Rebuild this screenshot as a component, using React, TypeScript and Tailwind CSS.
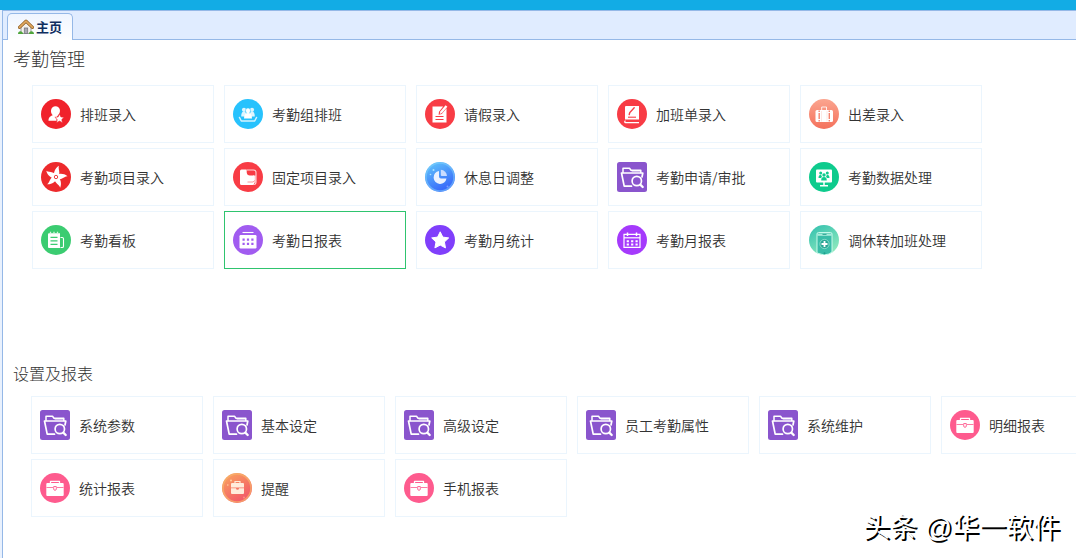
import type { ReactNode } from "react";

type Item = { label: string; icon: ReactNode; active?: boolean };

function Disc({ fill, children }: { fill: string; children: ReactNode }) {
  return (
    <svg viewBox="0 0 30 30" className="size-[30px] shrink-0" aria-hidden="true">
      <circle cx="15" cy="15" r="15" fill={fill} />
      {children}
    </svg>
  );
}

function HomeIcon() {
  return (
    <svg viewBox="0 0 16 16" className="size-4 shrink-0" aria-hidden="true">
      <path d="M3 8 8 3.5 13 8v6.5H3z" fill="#f3f1ee" stroke="#8b8b8b" strokeWidth=".8" />
      <rect x="6.3" y="9" width="3.4" height="5.5" fill="#a9a9b3" stroke="#77777f" strokeWidth=".8" />
      <path d="M1.500 8.400 8 2.200l6.500 6.200" fill="none" stroke="#8a5a1e" strokeWidth="3" strokeLinejoin="round" strokeLinecap="round" />
      <path d="M1.500 8.400 8 2.200l6.500 6.200" fill="none" stroke="#e0a860" strokeWidth="1.800" strokeLinejoin="round" strokeLinecap="round" />
      <path d="M0 15c0-2 1-2.800 2.400-2.800S4.800 13 5.200 15zM10.800 15c.2-2 1.200-2.800 2.600-2.800S16 13 16 15z" fill="#4fa53c" />
    </svg>
  );
}

const userStar = (
  <Disc fill="#f0222b">
    <path d="M7.500 21.800c0-3.600 1.800-4.700 4.300-5.600-3.200-3-2-9 2.700-9s5.900 5.600 2.700 8.800c-1.400 1.500-2 3.500-1.400 5.800z" fill="#fff" />
    <path d="m18.500 15 1.400 2.900 3.200.4-2.300 2.200.6 3.200-2.900-1.600-2.900 1.600.6-3.200-2.300-2.200 3.200-.4z" fill="#fff" stroke="#f0222b" strokeWidth=".6" />
  </Disc>
);

const group = (
  <Disc fill="#27c2fd">
    <g fill="#fff">
      <g opacity=".85">
        <circle cx="11" cy="10.800" r="2.100" />
        <circle cx="19" cy="10.800" r="2.100" />
        <path d="M8.200 17.500c0-3.500 1-5 2.800-5s2.500 1.500 2.500 5zM21.800 17.500c0-3.500-1-5-2.800-5s-2.500 1.500-2.500 5z" />
      </g>
      <ellipse cx="15" cy="11.800" rx="2.500" ry="2.900" stroke="#27c2fd" strokeWidth=".5" />
      <path d="M11 19.500c0-3.600 1.500-5.500 4-5.500s4 1.900 4 5.500z" />
    </g>
    <path d="M6.500 18.500 8.300 22h13.400l1.800-3.500" fill="none" stroke="#fff" strokeWidth="1.500" strokeLinejoin="round" strokeLinecap="round" opacity=".8" />
  </Disc>
);

const formEdit = (
  <Disc fill="#f83c45">
    <path d="M7.500 7.500h10.700L14 12.800l-.4 3 3.200-.8 4.700-5.800v14.300h-14z" fill="#fff" />
    <path d="m14.800 14.900.5-2.300 5.300-6.300 1.800 1.500-5.400 6.300z" fill="#fff" />
    <path d="M10.500 17.500h8M10.500 20.500h8" stroke="#f83c45" strokeWidth="1.100" />
  </Disc>
);

const bookEdit = (
  <Disc fill="#f83c45">
    <path d="M9 7h13v13.500H8V8a1 1 0 0 1 1-1z" fill="#fff" />
    <path d="M8.500 21.800c-1 0-1 1.800 0 1.800H22" fill="none" stroke="#fff" strokeWidth="1.200" />
    <path d="m12.200 15.500.6-2 4.400-4.700" fill="none" stroke="#f83c45" strokeWidth="1.400" strokeLinecap="round" />
    <path d="M11 18.200h8" stroke="#f83c45" strokeWidth="1.100" />
  </Disc>
);

const luggage = (
  <Disc fill="url(#coral)">
    <defs>
      <linearGradient id="coral" x1="0" y1="0" x2="0" y2="1">
        <stop stopColor="#fba58f" />
        <stop offset="1" stopColor="#f4715c" />
      </linearGradient>
    </defs>
    <path d="M12.700 11V8h4.800v3" fill="none" stroke="#fff" strokeWidth="1" opacity=".85" />
    <rect x="6.500" y="11" width="17.500" height="12" rx="1.500" fill="#fff" />
    <path d="M10.200 11.500v1.500m0 1v6m0 1v1.500M20.300 11.500v1.500m0 1v6m0 1v1.500" stroke="#f58470" strokeWidth="1.400" />
    <path d="M12.500 12v10.500M18 12v10.500" stroke="#fbd0c6" strokeWidth=".5" />
  </Disc>
);

const bladeAngles = [0, 72, 144, 216, 288];

const pinwheel = (
  <Disc fill="#ed2a2c">
    <g fill="#fff">
      {bladeAngles.map((angle) => (
        <path
          key={angle}
          d="M14.500 17C10 16 6.500 13.500 5.300 8.800c1.800 1.300 4 1 6.200 1.600 2.700.7 4.500 2.600 4.500 4.600z"
          transform={`rotate(${angle} 15 15)`}
        />
      ))}
    </g>
    <circle cx="15" cy="15" r="1.700" fill="#fff" stroke="#ed2a2c" strokeWidth=".9" />
  </Disc>
);

const docFold = (
  <Disc fill="#f83c45">
    <path d="M8.500 7.500h5.200v2.700c0 2 1.300 3.300 3.300 3.300h4v8a1.500 1.500 0 0 1-1.500 1.500h-11A1.500 1.500 0 0 1 7 21.500V9a1.500 1.500 0 0 1 1.500-1.500z" fill="#fff" />
    <path d="M14 8h6.500a2.500 2.500 0 0 1 2.500 2.500V20a2.500 2.500 0 0 1-2.500 2.500" fill="none" stroke="#fff" strokeWidth="1.100" opacity=".8" />
    <path d="M20 13.500h2.500V20L20 22z" fill="#fff" opacity=".9" />
    <path d="M14.500 20h5.500l2-1.500" fill="none" stroke="#f98a8f" strokeWidth=".9" />
  </Disc>
);

const pie = (
  <Disc fill="url(#azure)">
    <defs>
      <linearGradient id="azure" x1=".2" y1="0" x2=".7" y2="1">
        <stop stopColor="#5fc3fb" />
        <stop offset="1" stopColor="#3560fa" />
      </linearGradient>
    </defs>
    <circle cx="15" cy="15" r="14" fill="none" stroke="#7fd0fb" strokeWidth="1.500" opacity=".55" />
    <path d="M14 9a6.500 6.500 0 1 0 7.500 7.500H16a2 2 0 0 1-2-2z" fill="#eaf1ff" />
    <path d="M15.800 7.800a6.300 6.300 0 0 1 6.200 6.200h-5.200a1 1 0 0 1-1-1z" fill="#c9dcff" />
    <circle cx="8.500" cy="8" r="1" fill="#a9e2ff" />
    <circle cx="5.500" cy="12.500" r=".8" fill="#a9e2ff" />
    <circle cx="22.500" cy="24.500" r="1" fill="#7e9dff" />
  </Disc>
);

const folder = (
  <svg viewBox="0 0 30 30" className="size-[30px] shrink-0" aria-hidden="true">
    <rect width="30" height="30" rx="2.500" fill="#8a55cd" />
    <g fill="none" stroke="#fff" strokeLinejoin="round" strokeLinecap="round">
      <path d="M6 10.500V6.200h6.500l1.500 2h9.800v2.300" strokeWidth="1.500" />
      <path d="M14.500 24.200H7.200L4.500 11h21.300l-.8 4" strokeWidth="1.700" />
      <path d="M15 9.200h8" strokeWidth=".8" />
      <circle cx="19.800" cy="19" r="4.700" strokeWidth="1.700" />
      <path d="m23.300 22.600 2.400 2.400" strokeWidth="2.300" />
    </g>
  </svg>
);

const screen = (
  <Disc fill="#0ecb8d">
    <rect x="7" y="7.500" width="16" height="13" rx="1" fill="#fff" />
    <path d="M15 20v3.500M11 23.700h8" stroke="#fff" strokeWidth="1.500" />
    <g fill="#0ecb8d">
      <circle cx="11.700" cy="11" r="1.500" />
      <circle cx="18.300" cy="11" r="1.500" />
      <circle cx="15" cy="13" r="1.700" />
      <path d="M9.500 16c0-2.300 1-3.300 2.500-3.300l1 2-1 1.300zM20.500 16c0-2.300-1-3.300-2.500-3.300l-1 2 1 1.300zM12.200 18.500c0-2.400 1-3.400 2.800-3.400s2.800 1 2.800 3.400z" />
    </g>
  </Disc>
);

const clipboard = (
  <Disc fill="#3bcc71">
    <path d="M8 8.300h11V23H8a1 1 0 0 1-1-1V9.300a1 1 0 0 1 1-1z" fill="#fff" />
    <path d="M9.500 6.800v2.500M13 6.800v2.500M16.500 6.800v2.500" stroke="#d8f6e3" strokeWidth="1.300" />
    <path d="M9.500 12.300h7M9.500 15.800h7M9.500 19.300h7" stroke="#3bcc71" strokeWidth="1.200" />
    <path d="M19.500 12.500h1.700a1.300 1.300 0 0 1 1.300 1.300v7.400a1.300 1.300 0 0 1-1.300 1.300h-1.700" fill="none" stroke="#fff" strokeWidth="1.100" />
  </Disc>
);

const dayReport = (
  <Disc fill="#a15cf0">
    <path d="M9.500 7.500h11" stroke="#fff" strokeWidth="1.100" />
    <rect x="6.500" y="10" width="17" height="13.500" rx="1.200" fill="#fff" />
    <path d="M9.500 14.700h11M9.500 18.900h11" stroke="#a15cf0" strokeWidth="2.200" strokeDasharray="2.200 2.200" />
  </Disc>
);

const star = (
  <Disc fill="#803ffb">
    <path d="m15.200 6.800 2.600 5.300 5.900.8-4.300 4.100 1.100 5.900-5.300-2.800-5.300 2.800 1.100-5.900-4.300-4.100 5.900-.8z" fill="#fff" stroke="#fff" strokeWidth="1" strokeLinejoin="round" />
  </Disc>
);

const monthReport = (
  <Disc fill="#a53afc">
    <path d="M7 9.300h16v13H7z" fill="none" stroke="#fff" strokeWidth="1.200" />
    <path d="M7 12.800h16" stroke="#fff" strokeWidth="1.200" />
    <path d="M10.500 7.500v3.500M19.500 7.500v3.500" stroke="#fff" strokeWidth="1.500" />
    <path d="M9.700 16.200h11M9.700 19.500h11" stroke="#fff" strokeWidth="1.900" strokeDasharray="2.200 2.200" />
  </Disc>
);

const phonePlus = (
  <Disc fill="url(#teal)">
    <defs>
      <linearGradient id="teal" x1="0" y1="0" x2=".6" y2="1">
        <stop stopColor="#2fbfae" />
        <stop offset="1" stopColor="#8de8bd" />
      </linearGradient>
    </defs>
    <path d="M8 28V9a1.500 1.500 0 0 1 1.500-1.500h12A1.500 1.500 0 0 1 23 9v18l-3 2-5 1z" fill="#39bda8" stroke="#d5fff0" strokeWidth=".9" />
    <path d="M8.500 10.800h14V8.500h-14z" fill="#d5fff0" opacity=".7" />
    <path d="M13.500 9.400h4" stroke="#1f9e8c" strokeWidth=".9" />
    <circle cx="15.500" cy="19" r="4.600" fill="#2aa594" stroke="#8fe0cf" strokeWidth=".9" />
    <path d="M15.500 16v6M12.500 19h6" stroke="#fff" strokeWidth="1.800" />
    <circle cx="15.500" cy="28.300" r="1" fill="#1f9e8c" />
  </Disc>
);

const briefcase = (
  <Disc fill="#fe5b8e">
    <path d="M10.500 10.500V8.300h9v2.200" fill="none" stroke="#fff" strokeWidth="1.300" strokeLinejoin="round" />
    <rect x="6.300" y="10" width="17.400" height="13" rx="1" fill="#fff" />
    <path d="M6.500 14.500h6.500M17 14.500h6.500" stroke="#fe5b8e" strokeWidth=".8" />
    <path d="M13.700 13.500h2.600V16a1.300 1.300 0 0 1-2.600 0z" fill="#fff" stroke="#fe5b8e" strokeWidth=".9" />
  </Disc>
);

const reminder = (
  <Disc fill="url(#sunset)">
    <defs>
      <linearGradient id="sunset" x1=".2" y1="0" x2=".8" y2="1">
        <stop stopColor="#f9a15f" />
        <stop offset="1" stopColor="#f2506a" />
      </linearGradient>
    </defs>
    <circle cx="15" cy="15" r="14" fill="none" stroke="#f7b06a" strokeWidth="1.600" opacity=".75" />
    <path d="M13 10V8.500h5V10" fill="none" stroke="#ffe9d6" strokeWidth="1.200" />
    <path d="M10 10h11a1 1 0 0 1 1 1v3.500H9V11a1 1 0 0 1 1-1zM9 15.200h5a1.500 1.500 0 0 0 3 0h5V20a1 1 0 0 1-1 1H10a1 1 0 0 1-1-1z" fill="#ffecdc" />
    <circle cx="9" cy="7.500" r="1" fill="#ffd0a3" />
    <circle cx="5.800" cy="12" r=".8" fill="#ffd0a3" />
    <circle cx="22" cy="24.500" r="1" fill="#fa8f83" />
  </Disc>
);

const attendance: Item[] = [
  { label: "排班录入", icon: userStar },
  { label: "考勤组排班", icon: group },
  { label: "请假录入", icon: formEdit },
  { label: "加班单录入", icon: bookEdit },
  { label: "出差录入", icon: luggage },
  { label: "考勤项目录入", icon: pinwheel },
  { label: "固定项目录入", icon: docFold },
  { label: "休息日调整", icon: pie },
  { label: "考勤申请/审批", icon: folder },
  { label: "考勤数据处理", icon: screen },
  { label: "考勤看板", icon: clipboard },
  { label: "考勤日报表", icon: dayReport, active: true },
  { label: "考勤月统计", icon: star },
  { label: "考勤月报表", icon: monthReport },
  { label: "调休转加班处理", icon: phonePlus },
];

const settings: Item[] = [
  { label: "系统参数", icon: folder },
  { label: "基本设定", icon: folder },
  { label: "高级设定", icon: folder },
  { label: "员工考勤属性", icon: folder },
  { label: "系统维护", icon: folder },
  { label: "明细报表", icon: briefcase },
  { label: "统计报表", icon: briefcase },
  { label: "提醒", icon: reminder },
  { label: "手机报表", icon: briefcase },
];

function Tile({ item }: { item: Item }) {
  return (
    <button
      type="button"
      className={`flex h-[58px] items-center gap-[9px] border bg-white px-2 text-left text-sm font-[350] text-[#333] hover:border-[#2fc46f] ${
        item.active ? "border-[#2fc46f]" : "border-[#ebf5fd]"
      }`}
    >
      {item.icon}
      <span className="whitespace-nowrap">{item.label}</span>
    </button>
  );
}

export default function App() {
  return (
    <div className="flex min-h-screen flex-col overflow-hidden bg-[#e9f1fd] font-['Noto_Sans_CJK_SC',sans-serif]">
      <header className="h-[10px] bg-[#12ace5]" />
      <div className="ml-[2px] flex grow flex-col border-t border-l border-[#95b8e7] bg-white">
        <nav className="flex h-[29px] items-end border-b border-[#95b8e7] bg-[#e0ecff] pl-1" role="tablist">
          <button
            type="button"
            role="tab"
            aria-selected="true"
            className="-mb-px flex h-[27px] items-center gap-[2px] rounded-t-[5px] border border-b-0 border-[#95b8e7] bg-linear-to-b from-[#eff5ff] to-white px-[10px] text-[13px] font-bold text-[#0e2d5f]"
          >
            <HomeIcon />
            主页
          </button>
        </nav>
        <main className="relative grow">
          <section>
            <h2 className="px-[10px] pt-[6px] text-[18px] leading-6 font-light text-[#333]">考勤管理</h2>
            <div className="grid grid-cols-[repeat(5,182px)] gap-x-[10px] gap-y-[5px] pt-[15px] pl-[29px]">
              {attendance.map((item) => (
                <Tile key={item.label} item={item} />
              ))}
            </div>
          </section>
          <section className="pt-[92px]">
            <h2 className="px-[10px] text-base leading-6 font-light text-[#333]">设置及报表</h2>
            <div className="grid grid-cols-[repeat(6,172px)] gap-x-[10px] gap-y-[5px] pt-[11px] pl-[28px]">
              {settings.map((item) => (
                <Tile key={item.label} item={item} />
              ))}
            </div>
          </section>
          <p className="absolute right-4 bottom-3 font-['Liberation_Sans','Noto_Sans_CJK_SC',sans-serif] text-[27px] leading-9 text-white [text-shadow:2px_2px_0_#000]">
            头条 @华一软件
          </p>
        </main>
      </div>
    </div>
  );
}
